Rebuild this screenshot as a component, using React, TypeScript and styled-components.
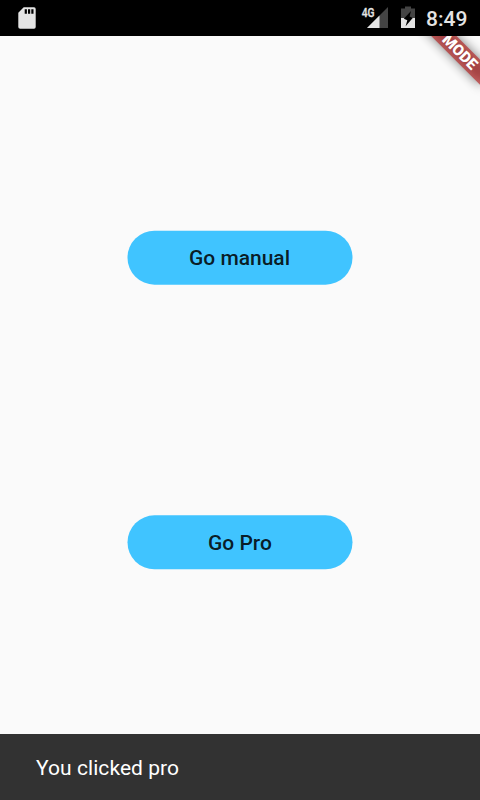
import React from "react";
import styled, { createGlobalStyle } from "styled-components";

const GlobalStyle = createGlobalStyle`
  body {
    margin: 0;
    background: #fafafa;
    font-family: Roboto, "Liberation Sans", sans-serif;
  }
`;

const Screen = styled.div`
  display: grid;
  grid-template: 36px 1fr 66px / 480px;
  width: 480px;
  height: 800px;
  overflow: hidden;
  position: relative;
`;

const StatusBar = styled.header`
  position: relative;
  z-index: 2;
  grid-area: 1 / 1;
  display: flex;
  justify-content: space-between;
  background: #000;
`;

const StatusIcon = styled.svg`
  display: block;
  flex: none;
`;

const Clock = styled.time`
  width: 56px;
  padding-left: 2px;
  box-sizing: border-box;
  font-size: 21px;
  font-weight: 500;
  line-height: 38px;
  color: #e4e4e4;
`;

const StatusGroup = styled.div`
  display: flex;
`;

const Choices = styled.main`
  grid-area: 1 / 1 / 4 / 2;
  display: flex;
  flex-direction: column;
  align-items: center;
  gap: 230px;
  padding-top: 231px;
`;

const PillButton = styled.button<{ $shift: number }>`
  width: 225px;
  height: 54px;
  margin: 0 1px 0 0;
  padding: 0;
  border: 0;
  border-radius: 27px;
  transform: translate(0.5px, ${(p) => p.$shift}px);
  background: #40c4ff;
  color: rgba(0, 0, 0, 0.87);
  font: 500 21px/54px Roboto, sans-serif;
`;

const Label = styled.span<{ $drop?: number; $nudge?: number }>`
  display: block;
  padding-top: ${(p) => p.$drop ?? 0}px;
  padding-right: ${(p) => p.$nudge ?? 0}px;
`;

const Banner = styled.div`
  position: absolute;
  z-index: 1;
  top: 42px;
  left: 420px;
  width: 120px;
  height: 18px;
  transform-origin: 60px -42px;
  transform: rotate(45deg);
  color: #fff;
  font-size: 15.3px;
  font-weight: 900;
  line-height: 18px;
  text-align: center;
  white-space: nowrap;

  &::before,
  &::after {
    content: "";
    position: absolute;
    inset: 0;
  }

  &::before {
    z-index: -2;
    background: rgba(0, 0, 0, 0.5);
    filter: blur(5.5px);
  }

  &::after {
    z-index: -1;
    background: rgba(183, 28, 28, 0.627);
  }
`;

const Snackbar = styled.div`
  grid-area: 3 / 1;
  z-index: 1;
  padding-left: 36px;
  background: #323232;
  color: #fff;
  font-size: 21px;
  letter-spacing: 0.06px;
  line-height: 68px;
  height: 66px;
  box-sizing: border-box;
`;

const NetworkLabel = styled.text`
  font: 500 13px Roboto, sans-serif;
`;

const SdCardIcon = () => (
  <StatusIcon width="60" height="36" viewBox="0 0 60 36">
    <path
      fill="#e4e4e4"
      fillRule="evenodd"
      d="M23.7 7.300H34q1.700 0 1.700 1.700v18q0 1.700-1.700 1.700H20.200q-1.900 0-1.900-1.700V12.700ZM24.700 9.300v4.500h2.200V9.300ZM28 9.300v4.500h2.200V9.300ZM31.300 9.300v4.500h2.200V9.300Z"
    />
  </StatusIcon>
);

const SignalIcon = () => (
  <StatusIcon width="35" height="36" viewBox="355 0 35 36">
    <path fill="#444" d="M388 7v21h-21Z" />
    <path fill="#e4e4e4" d="M379.500 15.500V28H367Z" />
    <NetworkLabel x="361.700" y="17" fill="#e4e4e4" stroke="#e4e4e4" strokeWidth="0.3" textLength="12.800" lengthAdjust="spacingAndGlyphs">
      4G
    </NetworkLabel>
  </StatusIcon>
);

const BatteryIcon = () => (
  <StatusIcon width="34" height="36" viewBox="390 0 34 36">
    <path fill="#444" d="M405 6.500h6v2h4V18h-14V8.500h4Z" />
    <path fill="#e4e4e4" d="M401 18h14v10h-14Z" />
    <path fill="#000" d="M411 11L403.800 18.800L407.300 20.300L405.600 26.200L412.700 17.900L409.600 16.500Z" />
  </StatusIcon>
);

export default function App() {
  return (
    <>
      <GlobalStyle />
      <Screen>
        <StatusBar>
          <SdCardIcon />
          <StatusGroup>
            <SignalIcon />
            <BatteryIcon />
            <Clock>8:49</Clock>
          </StatusGroup>
        </StatusBar>
        <Choices>
          <PillButton $shift={-0.33}>
            <Label $nudge={1}>Go manual</Label>
          </PillButton>
          <PillButton $shift={0.33}>
            <Label $drop={1}>Go Pro</Label>
          </PillButton>
        </Choices>
        <Banner>SLOW MODE</Banner>
        <Snackbar role="status">You clicked pro</Snackbar>
      </Screen>
    </>
  );
}
